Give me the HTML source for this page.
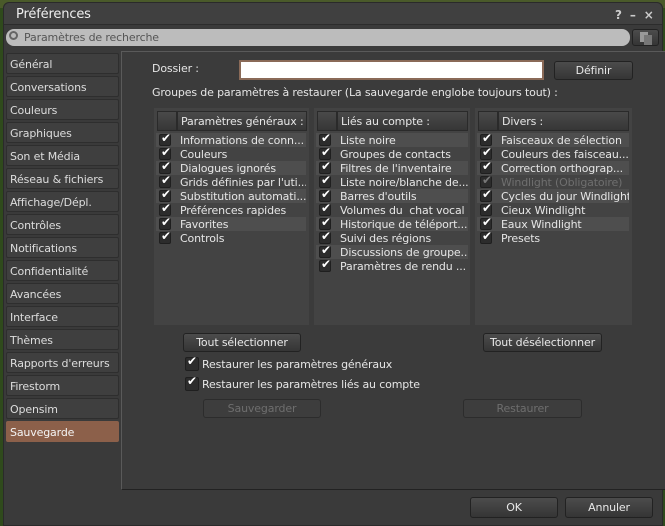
<!DOCTYPE html><html><head><style>
*{box-sizing:border-box;margin:0;padding:0}
body{width:665px;height:526px;overflow:hidden;background:#2f4a1c;font-family:"DejaVu Sans","Liberation Sans",sans-serif;font-size:11px;letter-spacing:-0.15px;color:#e6e6e6;position:relative}
.a{position:absolute}
.win{left:3px;top:2px;width:660px;height:524px;background:#3a3a3a;border-radius:6px 6px 0 0;border:1px solid #2a2a2a}
.tab{position:absolute;left:6px;width:113px;height:21px;background:#3f3f3f;border:1px solid #2e2e2e;border-radius:2px;padding:4px 0 0 3px;font-size:11px;color:#ddd}
.btn{position:absolute;height:19px;border:1px solid #222;border-radius:3px;background:linear-gradient(#4c4c4c,#353535);text-align:center;line-height:17px;color:#e8e8e8}
.dis{color:#6e6e6e;border-color:#2c2c2c;background:#3d3d3d}
.pan{position:absolute;top:108px;height:217px;background:#434343}
.hd{position:absolute;top:3px;height:20px;background:linear-gradient(#4a4a4a,#363636);border:1px solid #2a2a2a}
.row{position:absolute;left:2px;height:14px;line-height:15px;padding-left:24px;white-space:nowrap;overflow:hidden}
.row.s{background:#4e4e4e}
.cb{position:absolute;left:3px;top:1px;width:12px;height:12px;background:#2c2c2c;border:1px solid #1f1f1f;border-radius:2px}
.cb:after{content:"✔";position:absolute;left:1px;top:-4px;font-size:12px;color:#fff}
.gr{color:#6f6f6f}.gr .cb:after{color:#777}
</style></head><body>
<div class="a" style="left:0;top:0;width:665px;height:8px;background:#4a5a2a"></div>
<div class="a win"></div>
<div class="a" style="left:4px;top:3px;width:658px;height:22px;background:#404040;border-radius:6px 6px 0 0;border-bottom:1px solid #2c2c2c"></div>
<div class="a" style="left:16px;top:7px;font-size:13px;color:#eee">Préférences</div>
<div class="a" style="left:615px;top:8px;font-size:12px;font-weight:bold;color:#ccc">?&nbsp;&nbsp;–&nbsp;&nbsp;×</div>
<div class="a" style="left:6px;top:29px;width:624px;height:17px;background:#bcbcbc;border-radius:8px;color:#555;padding:2px 0 0 18px">Paramètres de recherche</div>
<div class="a" style="left:9px;top:31px;width:9px;height:9px;border:2px solid #666;border-radius:50%"></div>
<div class="btn" style="left:632px;top:29px;width:27px;height:17px"></div>
<div class="a" style="left:640px;top:32px;width:8px;height:10px;background:#999"></div>
<div class="a" style="left:644px;top:35px;width:8px;height:10px;background:#777"></div>
<div class="tab" style="top:53px">Général</div>
<div class="tab" style="top:76px">Conversations</div>
<div class="tab" style="top:99px">Couleurs</div>
<div class="tab" style="top:122px">Graphiques</div>
<div class="tab" style="top:145px">Son et Média</div>
<div class="tab" style="top:168px">Réseau &amp; fichiers</div>
<div class="tab" style="top:191px">Affichage/Dépl.</div>
<div class="tab" style="top:214px">Contrôles</div>
<div class="tab" style="top:237px">Notifications</div>
<div class="tab" style="top:260px">Confidentialité</div>
<div class="tab" style="top:283px">Avancées</div>
<div class="tab" style="top:306px">Interface</div>
<div class="tab" style="top:329px">Thèmes</div>
<div class="tab" style="top:352px">Rapports d'erreurs</div>
<div class="tab" style="top:375px">Firestorm</div>
<div class="tab" style="top:398px">Opensim</div>
<div class="tab" style="top:421px;background:#8c604a;border-color:#8c604a;color:#f4f4f4">Sauvegarde</div>
<div class="a" style="left:121px;top:51px;width:544px;height:439px;border-left:1px solid #5a5a5a;border-top:1px solid #5a5a5a;border-bottom:1px solid #222;background:#3b3b3b"></div>
<div class="a" style="left:152px;top:62px">Dossier :</div>
<div class="a" style="left:239px;top:60px;width:305px;height:20px;background:#fff;border:2px solid #8a6a58"></div>
<div class="btn" style="left:554px;top:61px;width:79px">Définir</div>
<div class="a" style="left:152px;top:86px">Groupes de paramètres à restaurer (La sauvegarde englobe toujours tout) :</div>

<div class="pan" style="left:154px;width:155px">
<div class="hd" style="left:3px;width:20px"></div><div class="hd" style="left:23px;width:130px;padding:3px 0 0 3px">Paramètres généraux :</div>
<div class="row s" style="top:25px;width:150px"><span class="cb"></span>Informations de conn...</div>
<div class="row" style="top:39px;width:150px"><span class="cb"></span>Couleurs</div>
<div class="row s" style="top:53px;width:150px"><span class="cb"></span>Dialogues ignorés</div>
<div class="row" style="top:67px;width:150px"><span class="cb"></span>Grids définies par l'uti...</div>
<div class="row s" style="top:81px;width:150px"><span class="cb"></span>Substitution automati...</div>
<div class="row" style="top:95px;width:150px"><span class="cb"></span>Préférences rapides</div>
<div class="row s" style="top:109px;width:150px"><span class="cb"></span>Favorites</div>
<div class="row" style="top:123px;width:150px"><span class="cb"></span>Controls</div>
</div>
<div class="pan" style="left:314px;width:156px">
<div class="hd" style="left:3px;width:20px"></div><div class="hd" style="left:23px;width:131px;padding:3px 0 0 3px">Liés au compte :</div>
<div class="row s" style="top:25px;width:152px"><span class="cb"></span>Liste noire</div>
<div class="row" style="top:39px;width:152px"><span class="cb"></span>Groupes de contacts</div>
<div class="row s" style="top:53px;width:152px"><span class="cb"></span>Filtres de l'inventaire</div>
<div class="row" style="top:67px;width:152px"><span class="cb"></span>Liste noire/blanche de...</div>
<div class="row s" style="top:81px;width:152px"><span class="cb"></span>Barres d'outils</div>
<div class="row" style="top:95px;width:152px"><span class="cb"></span>Volumes du&nbsp; chat vocal</div>
<div class="row s" style="top:109px;width:152px"><span class="cb"></span>Historique de téléport...</div>
<div class="row" style="top:123px;width:152px"><span class="cb"></span>Suivi des régions</div>
<div class="row s" style="top:137px;width:152px"><span class="cb"></span>Discussions de groupe...</div>
<div class="row" style="top:151px;width:152px"><span class="cb"></span>Paramètres de rendu ...</div>
</div>
<div class="pan" style="left:475px;width:157px">
<div class="hd" style="left:3px;width:20px"></div><div class="hd" style="left:23px;width:131px;padding:3px 0 0 3px">Divers :</div>
<div class="row s" style="top:25px;width:152px"><span class="cb"></span>Faisceaux de sélection</div>
<div class="row" style="top:39px;width:152px"><span class="cb"></span>Couleurs des faisceau...</div>
<div class="row s" style="top:53px;width:152px"><span class="cb"></span>Correction orthograp...</div>
<div class="row gr" style="top:67px;width:152px"><span class="cb"></span>Windlight (Obligatoire)</div>
<div class="row s" style="top:81px;width:152px"><span class="cb"></span>Cycles du jour Windlight</div>
<div class="row" style="top:95px;width:152px"><span class="cb"></span>Cieux Windlight</div>
<div class="row s" style="top:109px;width:152px"><span class="cb"></span>Eaux Windlight</div>
<div class="row" style="top:123px;width:152px"><span class="cb"></span>Presets</div>
</div>

<div class="btn" style="left:183px;top:333px;width:118px">Tout sélectionner</div>
<div class="btn" style="left:483px;top:333px;width:119px">Tout désélectionner</div>
<div class="row" style="left:182px;top:357px;padding-left:20px"><span class="cb" style="width:14px;height:14px;top:0"></span>Restaurer les paramètres généraux</div>
<div class="row" style="left:182px;top:377px;padding-left:20px"><span class="cb" style="width:14px;height:14px;top:0"></span>Restaurer les paramètres liés au compte</div>
<div class="btn dis" style="left:203px;top:399px;width:118px">Sauvegarder</div>
<div class="btn dis" style="left:463px;top:399px;width:119px">Restaurer</div>
<div class="btn" style="left:470px;top:497px;width:88px;height:21px;line-height:19px">OK</div>
<div class="btn" style="left:565px;top:497px;width:88px;height:21px;line-height:19px">Annuler</div>
</body></html>
